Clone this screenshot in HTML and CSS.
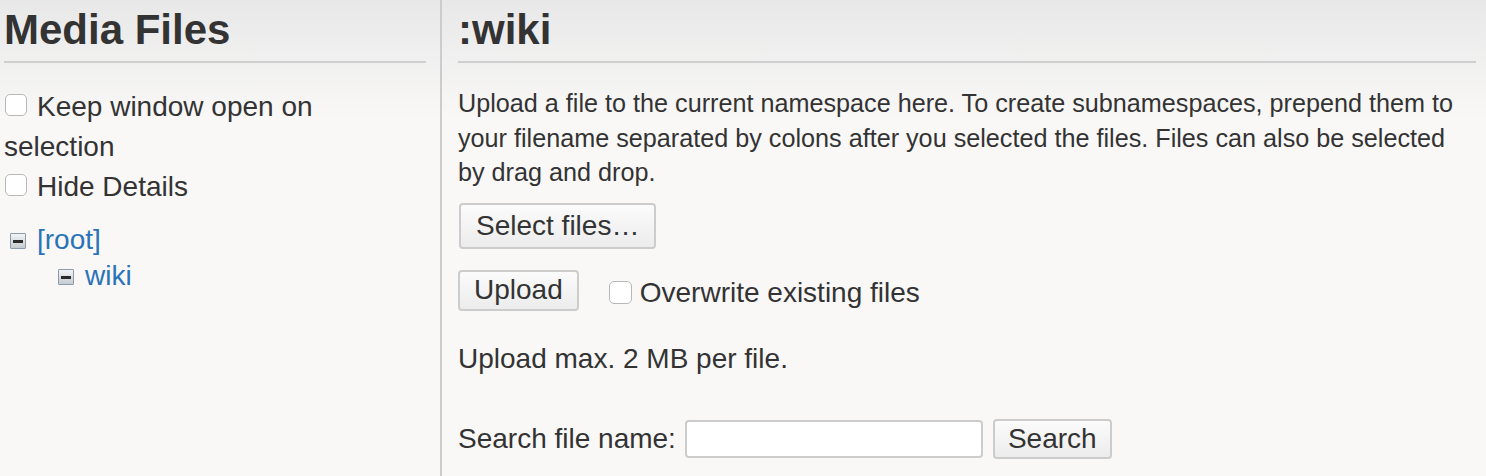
FILE: index.html
```html
<!DOCTYPE html>
<html lang="en">
<head>
<meta charset="utf-8">
<title>Media Files</title>
<link rel="stylesheet" href="styles.css">
</head>
<body>
<div class="manager">
  <aside class="sidebar">
    <h1 class="title">Media Files</h1>
    <div class="options">
      <label class="opt"><input type="checkbox" class="cb">Keep window open on selection</label>
      <label class="opt"><input type="checkbox" class="cb">Hide Details</label>
    </div>
    <ul class="tree">
      <li><span class="node"><span class="minus"></span><a href="#" class="link">[root]</a></span>
        <ul class="tree sub">
          <li><span class="node"><span class="minus"></span><a href="#" class="link">wiki</a></span></li>
        </ul>
      </li>
    </ul>
  </aside>
  <main class="content">
    <h1 class="title">:wiki</h1>
    <p class="desc">Upload a file to the current namespace here. To create subnamespaces, prepend them to your filename separated by colons after you selected the files. Files can also be selected by drag and drop.</p>
    <div class="select-row"><button class="btn btn-select" type="button">Select files…</button></div>
    <div class="upload-row">
      <button class="btn btn-upload" type="button">Upload</button>
      <label class="overwrite"><input type="checkbox" class="cb cb-ow">Overwrite existing files</label>
    </div>
    <p class="max">Upload max. 2 MB per file.</p>
    <form class="search">
      <label class="search-label" for="q">Search file name:</label>
      <input id="q" class="search-input" type="text">
      <button class="btn btn-search" type="button">Search</button>
    </form>
  </main>
</div>
</body>
</html>
```

FILE: styles.css
```css
html, body {
  margin: 0;
  padding: 0;
}
body {
  font-family: "Liberation Sans", Arial, sans-serif;
  font-size: 28px;
  line-height: 1.4;
  color: #333;
  background: #f9f8f7 linear-gradient(to bottom, #e8e8e8 0, #f9f8f7 120px) no-repeat;
  min-height: 100vh;
}
.manager {
  display: flex;
  min-height: 476px;
}
.sidebar {
  box-sizing: border-box;
  width: 442px;
  flex: none;
  padding: 0 14px 0 4px;
  border-right: 2px solid #cccccc;
}
.content {
  flex: 1;
  padding: 0 10px 0 16px;
}
.title {
  margin: 5px 0 0;
  padding: 0 0 6px;
  font-size: 42px;
  font-weight: bold;
  line-height: 50px;
  border-bottom: 2px solid #cfcfcf;
}
.options {
  margin-top: 24px;
  line-height: 40px;
}
.opt {
  display: block;
}
.cb {
  -webkit-appearance: none;
  appearance: none;
  box-sizing: border-box;
  width: 22px;
  height: 22px;
  margin: 0 10px 0 1px;
  border: 1.5px solid #b8b8b8;
  border-radius: 5px;
  background: #fff;
  vertical-align: 0;
}
.tree {
  list-style: none;
  margin: 15px 0 0;
  padding: 0 0 0 6px;
  line-height: 36px;
}
.tree li {
  display: block;
}
.tree.sub {
  margin: 0;
  padding-left: 48px;
}
.node {
  display: flex;
  align-items: center;
  gap: 11px;
}
.minus {
  box-sizing: border-box;
  width: 16px;
  height: 16px;
  border: 1px solid #8d9aab;
  border-radius: 1px;
  background: linear-gradient(to bottom, #f2f4f6, #c6cbd0);
  display: flex;
  align-items: center;
  justify-content: center;
  margin-top: 2px;
}
.minus::before {
  content: "";
  width: 10px;
  height: 3px;
  background: #2a2a2a;
}
.link {
  color: #2b73b7;
  text-decoration: none;
}
.desc {
  margin: 23px 0 0;
  font-size: 25.2px;
  line-height: 34.5px;
}
.select-row {
  margin-top: 13px;
  padding-left: 1px;
}
.btn {
  font-family: "Liberation Sans", Arial, sans-serif;
  font-size: 28px;
  line-height: 32px;
  color: #333;
  background: linear-gradient(to bottom, #fbfbfb, #ececec);
  border: 2px solid #cccccc;
  border-radius: 4px;
  margin: 0;
}
.btn-select {
  padding: 5px 15px;
}
.upload-row {
  margin-top: 21px;
  display: flex;
  align-items: center;
}
.btn-upload {
  padding: 2px 14px 3px;
}
.overwrite {
  margin-left: 30px;
  display: flex;
  align-items: center;
  padding-top: 3px;
}
.cb-ow {
  margin: 0 8px 0 0;
  width: 23px;
  height: 23px;
}
.max {
  margin: 27px 0 0;
}
.search {
  margin-top: 41px;
  display: flex;
  align-items: center;
}
.search-label {
  margin-right: 9px;
}
.search-input {
  box-sizing: border-box;
  width: 298px;
  height: 38px;
  border: 2px solid #cccccc;
  border-radius: 4px;
  background: #fff;
  margin: 0 10px 0 0;
  padding: 0 6px;
  font-size: 24px;
}
.btn-search {
  padding: 2px 13px 2px;
}
```
